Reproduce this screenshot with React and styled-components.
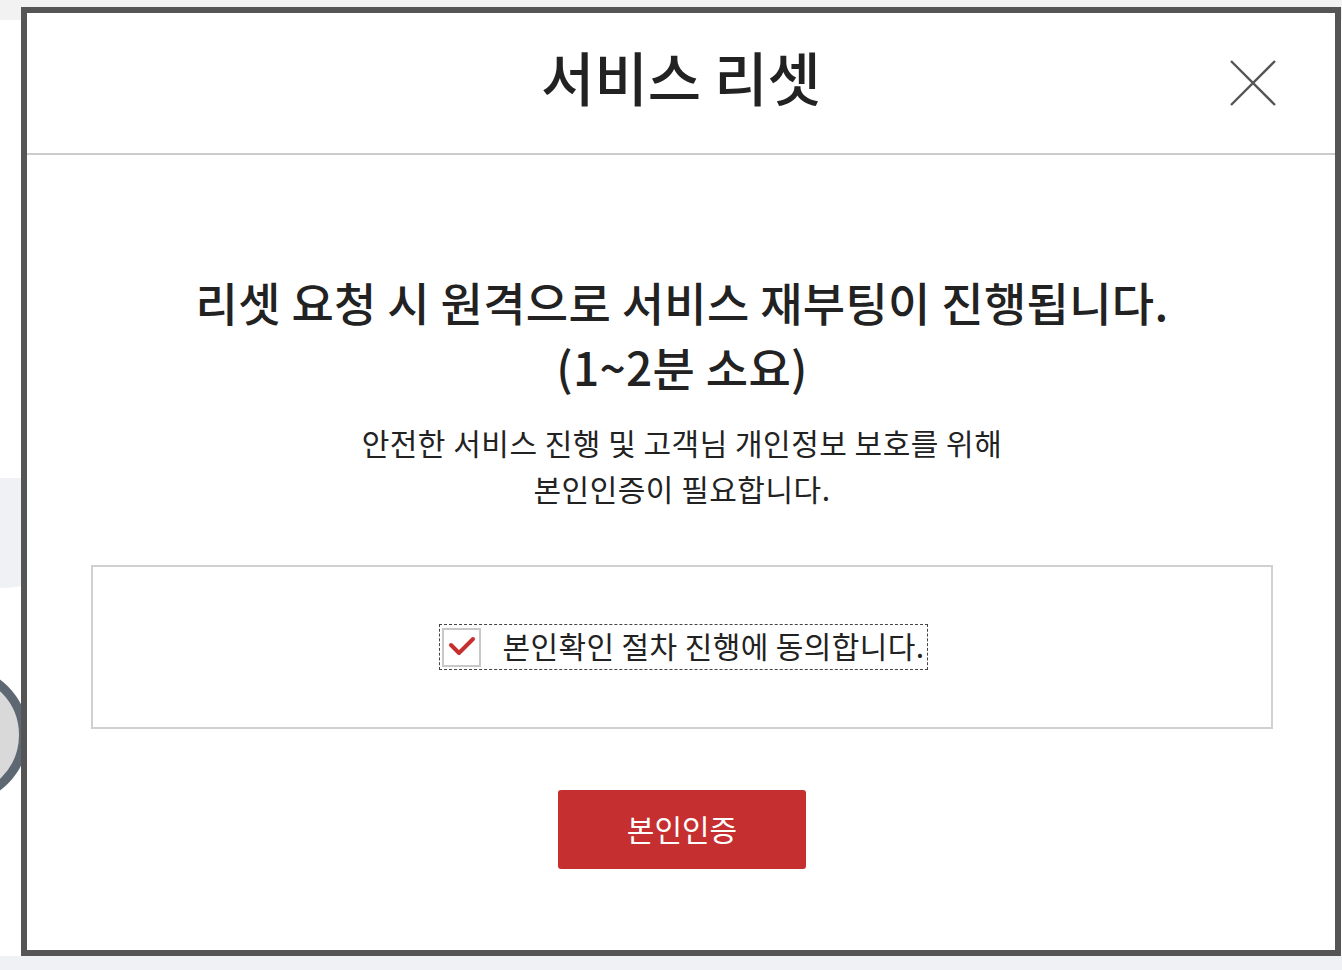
import React from "react";
import styled, { createGlobalStyle } from "styled-components";

const Global = createGlobalStyle`
  html, body { margin: 0; padding: 0; background: #ffffff; }
  body { font-family: "Noto Sans CJK KR", "Noto Sans", sans-serif; }
  * { box-sizing: border-box; }
`;

const Page = styled.div`
  position: relative;
  width: 1342px;
  height: 970px;
  overflow: hidden;
  background: #ffffff;
`;

const TopStrip = styled.div`
  height: 20px;
  background: #f2f2f2;
`;

const SideBand = styled.div`
  position: absolute;
  left: 0;
  top: 478px;
  width: 60px;
  height: 110px;
  background: #f0f1f5;
  border-bottom-right-radius: 60px 30px;
`;

const SideCircle = styled.div`
  position: absolute;
  left: -110px;
  top: 666px;
  width: 138px;
  height: 138px;
  border-radius: 50%;
  border: 9px solid #5d6873;
  background: #d9d9d9;
`;

const BottomBand = styled.div`
  position: absolute;
  left: 0;
  right: 0;
  bottom: 0;
  height: 14px;
  background: #f0f1f5;
`;

const Modal = styled.div`
  position: absolute;
  left: 21px;
  top: 7px;
  width: 1320px;
  height: 949px;
  background: #ffffff;
  border: 6px solid #555555;
  display: flex;
  flex-direction: column;
`;

const Header = styled.div`
  height: 142px;
  border-bottom: 2px solid #cccccc;
  display: grid;
  grid-template-columns: 1fr auto 1fr;
  align-items: center;
`;

const Title = styled.h1`
  grid-column: 2;
  margin: 0;
  font-size: 58px;
  font-weight: 500;
  color: #222222;
  letter-spacing: 0;
  line-height: 1;
  padding-bottom: 14px;
`;

const CloseButton = styled.button`
  grid-column: 3;
  justify-self: end;
  margin-right: 58px;
  width: 48px;
  height: 48px;
  padding: 0;
  border: 0;
  background: transparent;
  display: flex;
  align-items: center;
  justify-content: center;
  cursor: pointer;
`;

const Body = styled.div`
  padding: 114px 62px 0 64px;
  display: flex;
  flex-direction: column;
  align-items: center;
`;

const Lead = styled.p`
  margin: 0;
  font-size: 46px;
  font-weight: 500;
  line-height: 65px;
  color: #222222;
  text-align: center;
  letter-spacing: 0.3px;
`;

const Sub = styled.p`
  margin: 20px 0 0;
  font-size: 30px;
  font-weight: 400;
  line-height: 46px;
  color: #222222;
  text-align: center;
  letter-spacing: 0.5px;
`;

const AgreeBox = styled.div`
  margin-top: 54px;
  width: 100%;
  height: 164px;
  border: 2px solid #d0d0d0;
  display: flex;
  align-items: center;
  justify-content: center;
`;

const AgreeLabel = styled.label`
  display: flex;
  align-items: center;
  gap: 21px;
  padding: 1px 2px;
  border: 1px dashed #444444;
  margin-left: 3px;
  cursor: pointer;
`;

const CheckBox = styled.span`
  width: 39px;
  height: 39px;
  border: 2px solid #c8c8c8;
  background: #ffffff;
  display: flex;
  align-items: center;
  justify-content: center;
`;

const AgreeText = styled.span`
  font-size: 30px;
  color: #222222;
  letter-spacing: 0.4px;
  line-height: 39px;
  padding-bottom: 3px;
`;

const Button = styled.button`
  margin-top: 61px;
  width: 248px;
  height: 79px;
  border: 0;
  border-radius: 3px;
  background: #c62f2f;
  color: #ffffff;
  font-family: "Noto Sans CJK KR", "Noto Sans", sans-serif;
  font-size: 30px;
  font-weight: 400;
  letter-spacing: 0;
  padding-bottom: 4px;
  cursor: pointer;
`;

export default function App() {
  return (
    <Page>
      <Global />
      <TopStrip />
      <SideBand />
      <SideCircle />
      <BottomBand />
      <Modal>
        <Header>
          <Title>서비스 리셋</Title>
          <CloseButton aria-label="닫기">
            <svg width="46" height="46" viewBox="0 0 46 46">
              <path d="M1 1 L45 45 M45 1 L1 45" stroke="#555" strokeWidth="2.4" fill="none" />
            </svg>
          </CloseButton>
        </Header>
        <Body>
          <Lead>
            리셋 요청 시 원격으로 서비스 재부팅이 진행됩니다.
            <br />
            (1~2분 소요)
          </Lead>
          <Sub>
            안전한 서비스 진행 및 고객님 개인정보 보호를 위해
            <br />
            본인인증이 필요합니다.
          </Sub>
          <AgreeBox>
            <AgreeLabel>
              <CheckBox>
                <svg width="28" height="22" viewBox="0 0 28 22">
                  <path d="M3 9 L11 17 L25 3" stroke="#c62f2f" strokeWidth="4" fill="none" strokeLinecap="round" strokeLinejoin="round" />
                </svg>
              </CheckBox>
              <AgreeText>본인확인 절차 진행에 동의합니다.</AgreeText>
            </AgreeLabel>
          </AgreeBox>
          <Button>본인인증</Button>
        </Body>
      </Modal>
    </Page>
  );
}
